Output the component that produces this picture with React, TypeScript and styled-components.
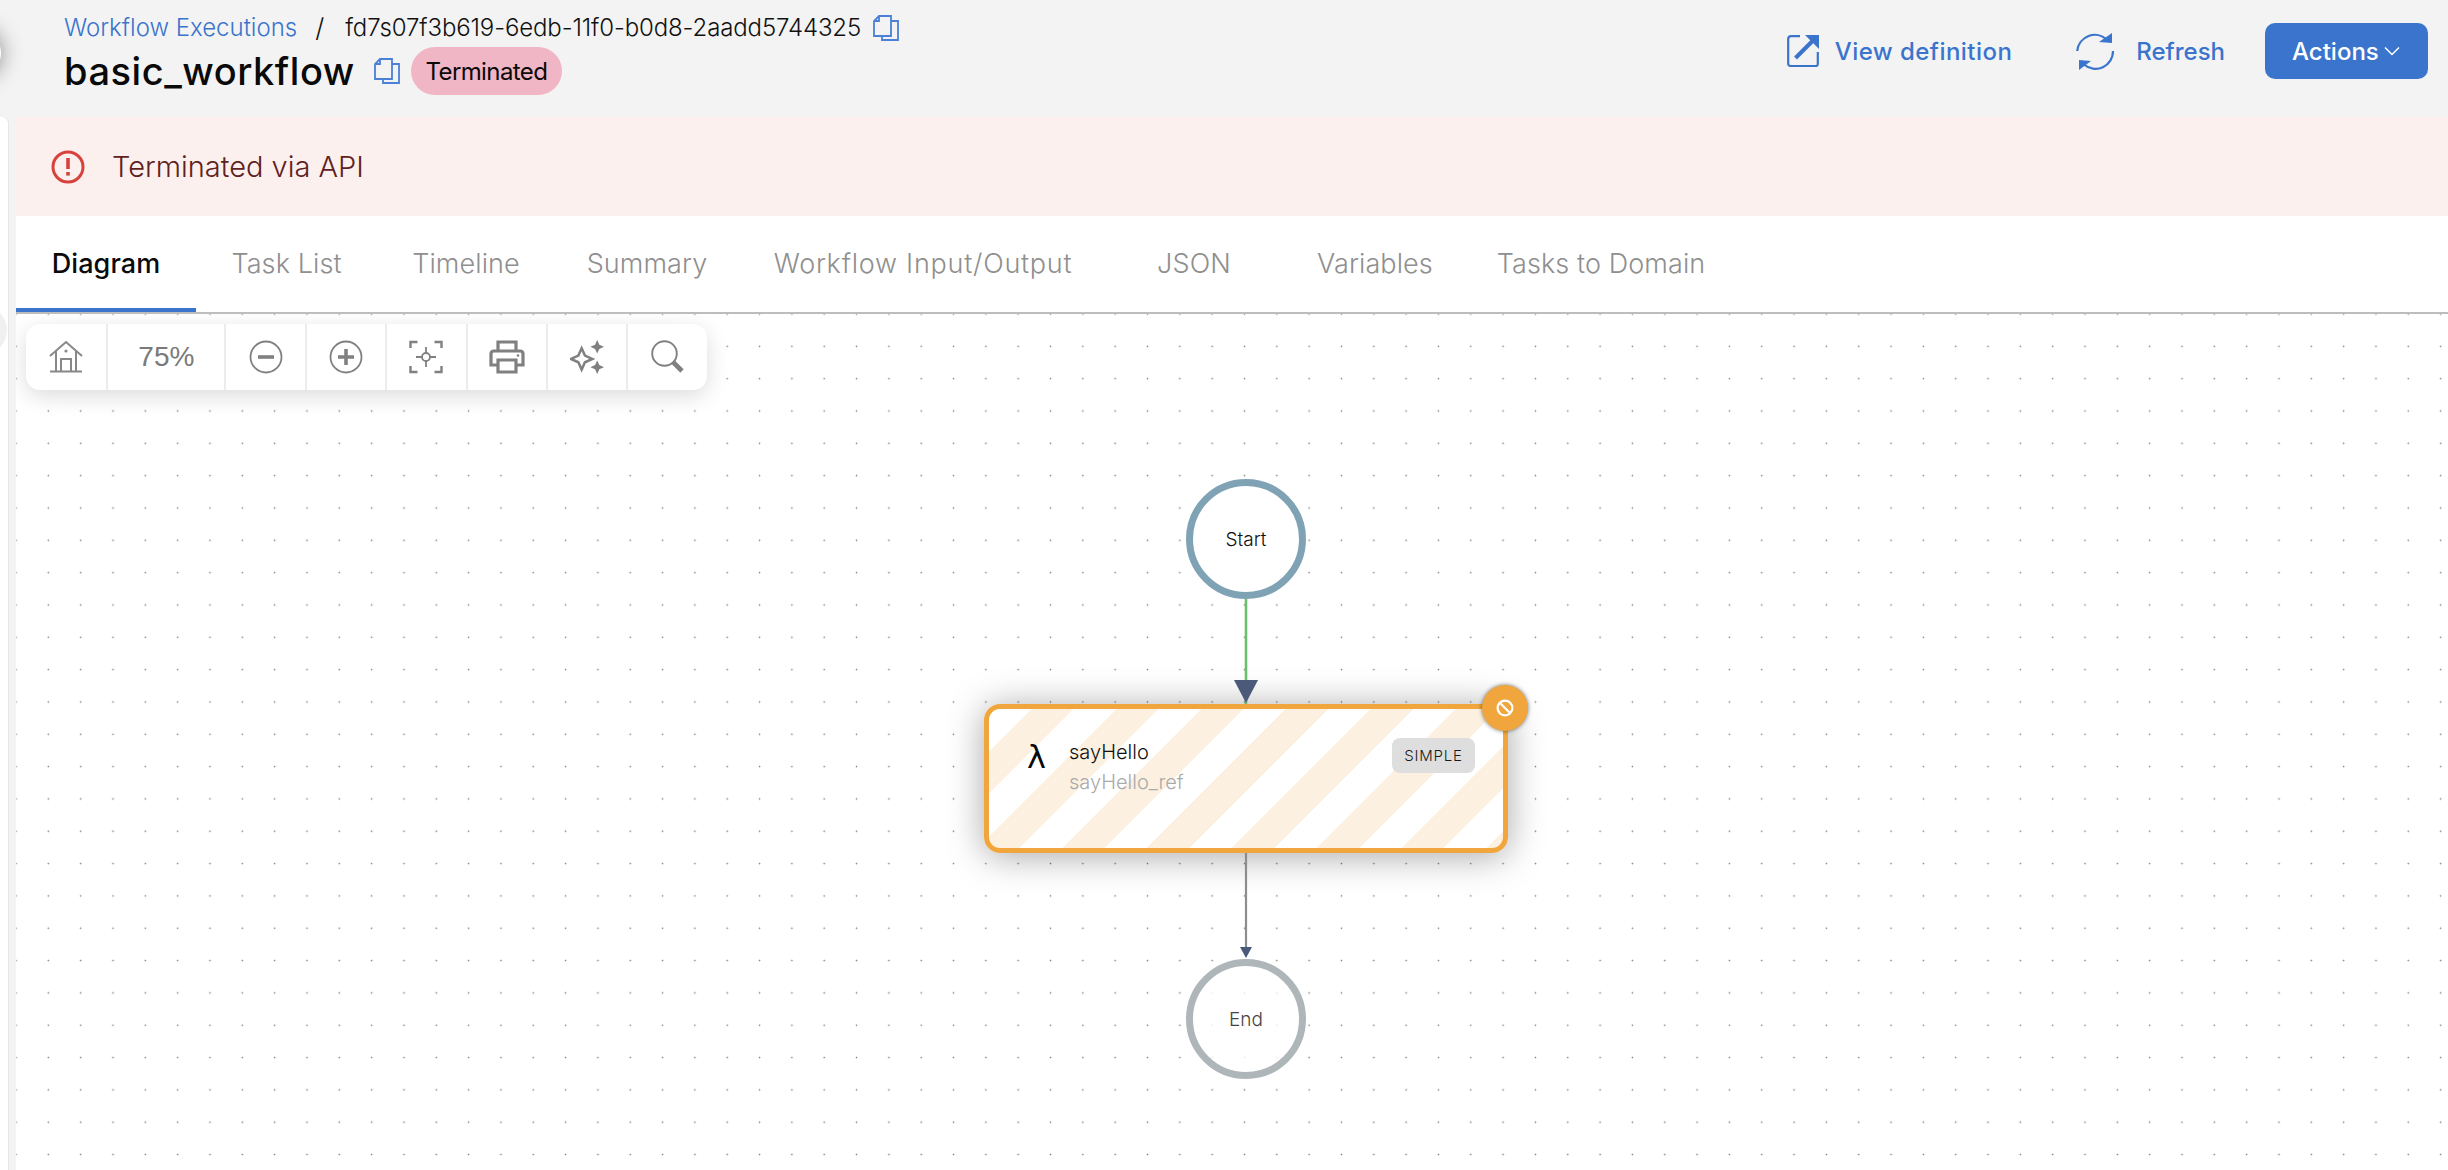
import * as React from 'react'
import styled, { createGlobalStyle } from 'styled-components'

const BLUE = '#3a74cd'
const FONT = `Inter, 'Noto Sans', 'Liberation Sans', sans-serif`

const GlobalStyle = createGlobalStyle`
  html, body {
    margin: 0;
    padding: 0;
    background: #f3f3f3;
    font-family: ${FONT};
  }
`

const CopyIcon = () => (
  <CopySvg viewBox="0 0 26 26" width="26" height="26" fill="none" stroke="#4a80d8" strokeWidth="1.8">
    <path d="M6 1h12v20H1V6z M6 1v5H1" />
    <path d="M18 6h7v19H9v-4" />
  </CopySvg>
)

const ExternalIcon = () => (
  <svg viewBox="0 0 32 32" width="32" height="32" fill="none" stroke={BLUE}>
    <path d="M13 1.2H4Q1.2 1.2 1.2 4v25Q1.2 31 4 31h25Q30.8 31 30.8 29V17" strokeWidth="2.2" />
    <path d="M8.5 23L26 5.5" strokeWidth="4" />
    <polygon points="18,0 32,0 32,14" fill={BLUE} stroke="none" />
  </svg>
)

const RefreshIcon = () => (
  <svg viewBox="0 0 38 38" width="38" height="38" fill="none" stroke={BLUE} strokeWidth="2.2">
    <path d="M1.2 19A17.5 17.5 0 0 1 31 8" />
    <path d="M37 19A17.5 17.5 0 0 1 8 32.5" />
    <polygon points="23,10 36,11 36,1" fill={BLUE} stroke="none" />
    <polygon points="3,28 15,29 3,38" fill={BLUE} stroke="none" />
  </svg>
)

const AlertIcon = () => (
  <svg viewBox="0 0 34 34" width="34" height="34" fill="none">
    <circle cx="17" cy="17" r="15" stroke="#d8423c" strokeWidth="3" />
    <rect x="15.2" y="8" width="3.6" height="11" fill="#d8423c" />
    <rect x="15.2" y="22" width="3.6" height="3.6" fill="#d8423c" />
  </svg>
)

const HomeIcon = () => (
  <svg viewBox="0 0 34 34" width="34" height="34" fill="none" stroke="#888" strokeWidth="2">
    <path d="M1 16L17 2l16 14" />
    <path d="M7 11v20M27 11v20M1 31.5h32" />
    <path d="M12 31V19h10v12" />
    <circle cx="17" cy="11" r="1.6" fill="#888" stroke="none" />
  </svg>
)

const MinusIcon = () => (
  <svg viewBox="0 0 34 34" width="34" height="34" fill="none" stroke="#808080">
    <circle cx="17" cy="17" r="15.5" strokeWidth="1.8" />
    <path d="M9 17h16" strokeWidth="3.6" />
  </svg>
)

const PlusIcon = () => (
  <svg viewBox="0 0 34 34" width="34" height="34" fill="none" stroke="#808080">
    <circle cx="17" cy="17" r="15.5" strokeWidth="1.8" />
    <path d="M9 17h16M17 9v16" strokeWidth="3.6" />
  </svg>
)

const FocusIcon = () => (
  <svg viewBox="0 0 34 34" width="34" height="34" fill="none" stroke="#808080" strokeWidth="2.4">
    <path d="M1.5 8V2h7M25.5 2h7v6M1.5 26v6h7M25.5 32h7v-6" />
    <circle cx="17" cy="17" r="4" strokeWidth="1.8" />
    <path d="M17 7v6M17 21v6M7 17h6M21 17h6" strokeWidth="1.8" />
  </svg>
)

const PrintIcon = () => (
  <svg viewBox="0 0 36 34" width="36" height="34" fill="none" stroke="#808080" strokeWidth="3.2">
    <path d="M9 10V2h18v8" />
    <path d="M8 25H2V14q0-3 3-3h26q3 0 3 3v11h-6" />
    <path d="M9 20h18v12H9z" />
    <circle cx="29" cy="15.5" r="1.3" fill="#808080" stroke="none" />
  </svg>
)

const SparkleIcon = () => (
  <svg viewBox="0 0 35 35" width="34" height="34" fill="#808080">
    <path
      d="M12 8.5l3.4 7.6L23 19.5l-7.6 3.4L12 30.5l-3.4-7.6L1 19.5l7.6-3.4z"
      fill="none"
      stroke="#808080"
      strokeWidth="2.6"
    />
    <path d="M28 0l2.2 4.8L35 7l-4.8 2.2L28 14l-2.2-4.8L21 7l4.8-2.2z" />
    <path d="M28 21l2.2 4.8L35 28l-4.8 2.2L28 35l-2.2-4.8L21 28l4.8-2.2z" />
  </svg>
)

const SearchIcon = () => (
  <svg viewBox="0 0 34 34" width="34" height="34" fill="none" stroke="#808080">
    <circle cx="13.5" cy="13.5" r="12.3" strokeWidth="1.9" />
    <path d="M22 22l9 9" strokeWidth="4.6" />
  </svg>
)

const BanIcon = () => (
  <svg viewBox="0 0 18 18" width="18" height="18" fill="none" stroke="#fff" strokeWidth="2.2">
    <circle cx="9" cy="9" r="7.4" />
    <path d="M4 4l10 10" />
  </svg>
)

const tabs = [
  { label: 'Diagram', width: 180, active: true },
  { label: 'Task List', width: 181 },
  { label: 'Timeline', width: 178 },
  { label: 'Summary', width: 184 },
  { label: 'Workflow Input/Output', width: 368, spacing: 0.75 },
  { label: 'JSON', width: 174 },
  { label: 'Variables', width: 188 },
  { label: 'Tasks to Domain', width: 264 }
]

const tools = [
  { icon: <HomeIcon /> },
  { text: '75%' },
  { icon: <MinusIcon /> },
  { icon: <PlusIcon /> },
  { icon: <FocusIcon /> },
  { icon: <PrintIcon /> },
  { icon: <SparkleIcon /> },
  { icon: <SearchIcon /> }
]

export default function App() {
  return (
    <Page>
      <GlobalStyle />
      <CollapseHandle />
      <Header>
        <TitleBlock>
          <Crumbs>
            <CrumbLink>Workflow Executions</CrumbLink>
            <CrumbSlash>/</CrumbSlash>
            <CrumbId>fd7s07f3b619-6edb-11f0-b0d8-2aadd5744325</CrumbId>
            <CopyIcon />
          </Crumbs>
          <TitleRow>
            <Title>basic_workflow</Title>
            <CopyIcon />
            <StatusBadge>Terminated</StatusBadge>
          </TitleRow>
        </TitleBlock>
        <HeaderActions>
          <LinkButton $gap={16} $after={64} $spacing={0.45}>
            <ExternalIcon />
            View definition
          </LinkButton>
          <LinkButton $gap={22} $after={40}>
            <RefreshIcon />
            Refresh
          </LinkButton>
          <ActionsButton>
            Actions
            <svg viewBox="0 0 16 10" width="16" height="10" fill="none" stroke="#fff" strokeWidth="1.5">
              <path d="M1 1.5l7 7 7-7" />
            </svg>
          </ActionsButton>
        </HeaderActions>
      </Header>
      <Body>
        <SideEdge>
          <SideHandle />
        </SideEdge>
        <Main>
          <Banner>
            <AlertIcon />
            <BannerText>Terminated via API</BannerText>
          </Banner>
          <TabBar>
            {tabs.map(tab => (
              <Tab key={tab.label} $width={tab.width} $active={tab.active} $spacing={tab.spacing}>
                {tab.label}
              </Tab>
            ))}
          </TabBar>
          <Canvas>
            <Toolbar>
              {tools.map((tool, i) => (
                <ToolCell key={i} $wide={!!tool.text}>
                  {tool.icon || tool.text}
                </ToolCell>
              ))}
            </Toolbar>
            <Edges viewBox="0 0 2432 856" width="2432" height="856">
              <line x1="1230" y1="285" x2="1230" y2="390" stroke="#6cbf6c" strokeWidth="2.6" />
              <polygon points="1218,366 1242,366 1230,389" fill="#4a5a78" />
              <line x1="1230" y1="539" x2="1230" y2="636" stroke="#8b8e91" strokeWidth="2.2" />
              <polygon points="1224,633 1236,633 1230,644" fill="#4a5a78" />
            </Edges>
            <Terminal $left={1170} $top={165} $ring="#7fa3b5" $opaque>
              Start
            </Terminal>
            <TaskNode>
              <Lambda>λ</Lambda>
              <TaskNames>
                <TaskName>sayHello</TaskName>
                <TaskRef>sayHello_ref</TaskRef>
              </TaskNames>
              <TaskChip>SIMPLE</TaskChip>
              <StatusDot>
                <BanIcon />
              </StatusDot>
            </TaskNode>
            <Terminal $left={1170} $top={645} $ring="#aeb6b9" $muted>
              End
            </Terminal>
          </Canvas>
        </Main>
      </Body>
    </Page>
  )
}

const Page = styled.div`
  position: relative;
  width: 2448px;
  height: 1170px;
  overflow: hidden;
  display: flex;
  flex-direction: column;
  background: #f3f3f3;
`

const CollapseHandle = styled.div`
  position: absolute;
  left: -49px;
  top: 28px;
  width: 50px;
  height: 50px;
  border-radius: 50%;
  background: #fff;
  box-shadow: 0 0 22px rgba(0, 0, 0, 0.45);
`

const Header = styled.header`
  height: 117px;
  flex: none;
  display: flex;
  justify-content: space-between;
  padding: 0 20px 0 64px;
  box-sizing: border-box;
`

const TitleBlock = styled.div`
  display: flex;
  flex-direction: column;
`

const Crumbs = styled.div`
  height: 47px;
  padding-top: 8px;
  box-sizing: border-box;
  display: flex;
  align-items: center;
  white-space: nowrap;
`

const CrumbLink = styled.span`
  color: ${BLUE};
  font-weight: 300;
  font-size: 24px;
`

const CrumbSlash = styled.span`
  margin: 0 21px 0 18px;
  font-size: 26px;
  font-weight: 300;
  color: #111;
`

const CrumbId = styled.span`
  color: #111;
  font-weight: 300;
  font-size: 24px;
  margin-right: 12px;
  letter-spacing: -0.12px;
`

const CopySvg = styled.svg`
  flex: none;
`

const TitleRow = styled.div`
  height: 48px;
  display: flex;
  align-items: center;
`

const Title = styled.h1`
  margin: 0 19px 0 0;
  font-size: 38px;
  font-weight: 500;
  color: #0a0a0a;
  letter-spacing: 0.55px;
`

const StatusBadge = styled.span`
  margin-left: 11px;
  height: 48px;
  width: 151px;
  border-radius: 24px;
  background: #f0b6c5;
  display: flex;
  align-items: center;
  justify-content: center;
  font-size: 24px;
  letter-spacing: -0.6px;
  color: #0a0a0a;
`

const HeaderActions = styled.div`
  height: 56px;
  margin-top: 23px;
  display: flex;
  align-items: center;
`

const LinkButton = styled.div<{ $gap: number; $after: number; $spacing?: number }>`
  display: flex;
  align-items: center;
  gap: ${p => p.$gap}px;
  margin-right: ${p => p.$after}px;
  color: ${BLUE};
  font-size: 24px;
  font-weight: 500;
  letter-spacing: ${p => p.$spacing || 0}px;
  white-space: nowrap;
`

const ActionsButton = styled.div`
  width: 163px;
  height: 56px;
  box-sizing: border-box;
  padding-left: 27px;
  border-radius: 10px;
  background: ${BLUE};
  color: #fff;
  font-size: 24px;
  font-weight: 500;
  display: flex;
  align-items: center;
  gap: 5px;
`

const Body = styled.div`
  flex: 1;
  display: flex;
  min-height: 0;
`

const SideEdge = styled.div`
  position: relative;
  flex: none;
  width: 8px;
  margin-right: 8px;
  background: #fff;
  border-top-right-radius: 6px;
  box-shadow: 1px 0 0 #e6e6e6;
  overflow: hidden;
`

const SideHandle = styled.div`
  position: absolute;
  left: -43px;
  top: 188px;
  width: 50px;
  height: 50px;
  border-radius: 50%;
  background: #f0f0f0;
`

const Main = styled.main`
  flex: 1;
  min-width: 0;
  display: flex;
  flex-direction: column;
  background: #fff;
`

const Banner = styled.div`
  height: 99px;
  flex: none;
  box-sizing: border-box;
  padding-left: 35px;
  display: flex;
  align-items: center;
  gap: 27px;
  background: #fbf0ee;
`

const BannerText = styled.span`
  font-size: 29px;
  font-weight: 300;
  color: #5f2120;
`

const TabBar = styled.nav`
  height: 98px;
  flex: none;
  box-sizing: border-box;
  display: flex;
  border-bottom: 2px solid #bdbdbd;
  background: #fff;
`

const Tab = styled.div<{ $width: number; $active?: boolean; $spacing?: number }>`
  width: ${p => p.$width}px;
  height: 100%;
  box-sizing: border-box;
  padding-top: 2px;
  display: flex;
  align-items: center;
  justify-content: center;
  font-size: 27px;
  font-weight: ${p => (p.$active ? 500 : 300)};
  color: ${p => (p.$active ? '#0a0a0a' : '#8f8f8f')};
  letter-spacing: ${p => p.$spacing || 0.1}px;
  border-bottom: 4px solid ${p => (p.$active ? BLUE : 'transparent')};
  white-space: nowrap;
`

const Canvas = styled.section`
  position: relative;
  flex: 1;
  overflow: hidden;
  background-color: #fff;
  background-image: radial-gradient(circle, #808080 0.8px, transparent 1.05px);
  background-size: 32.33px 32.33px;
  background-position: -16.17px -16.17px;
`

const Toolbar = styled.div`
  position: absolute;
  left: 10px;
  top: 10px;
  height: 66px;
  display: flex;
  background: #fff;
  border-radius: 14px;
  box-shadow: 0 6px 22px rgba(0, 0, 0, 0.14);
  z-index: 2;
`

const ToolCell = styled.div<{ $wide: boolean }>`
  width: ${p => (p.$wide ? 118 : 80.4)}px;
  height: 100%;
  box-sizing: border-box;
  display: flex;
  align-items: center;
  justify-content: center;
  color: #7a7a7a;
  font-family: 'Liberation Sans', Arial, sans-serif;
  font-size: 28px;
  & + & {
    border-left: 2px solid #ececec;
  }
`

const Edges = styled.svg`
  position: absolute;
  left: 0;
  top: 0;
  z-index: 1;
`

const Terminal = styled.div<{ $left: number; $top: number; $ring: string; $opaque?: boolean; $muted?: boolean }>`
  position: absolute;
  left: ${p => p.$left}px;
  top: ${p => p.$top}px;
  width: 120px;
  height: 120px;
  box-sizing: border-box;
  border: 7.5px solid ${p => p.$ring};
  border-radius: 50%;
  background: ${p => (p.$opaque ? '#fff' : 'rgba(255, 255, 255, 0.8)')};
  display: flex;
  align-items: center;
  justify-content: center;
  font-size: 19px;
  font-weight: 300;
  color: ${p => (p.$muted ? '#444' : '#111')};
`

const TaskNode = styled.div`
  position: absolute;
  left: 968px;
  top: 390px;
  width: 524px;
  height: 149px;
  box-sizing: border-box;
  display: flex;
  align-items: flex-start;
  padding: 31px 28px 0 38px;
  border: 5px solid #f0a63c;
  border-radius: 16px;
  background: repeating-linear-gradient(135deg, #fff 0 30px, #fcf0e0 30px 60px);
  box-shadow: 0 3px 36px rgba(0, 0, 0, 0.35);
`

const Lambda = styled.span`
  width: 42px;
  margin-top: 1px;
  font-size: 32px;
  line-height: 32px;
  color: #0a0a0a;
  font-family: 'DejaVu Sans', sans-serif;
`

const TaskNames = styled.div`
  flex: 1;
  display: flex;
  flex-direction: column;
  gap: 5px;
`

const TaskName = styled.span`
  font-size: 20px;
  line-height: 25px;
  font-weight: 300;
  color: #111;
`

const TaskRef = styled.span`
  font-size: 20px;
  line-height: 25px;
  font-weight: 300;
  color: #aaa;
`

const TaskChip = styled.span`
  width: 83px;
  height: 35px;
  margin-top: -2px;
  border-radius: 8px;
  background: #dedede;
  display: flex;
  align-items: center;
  justify-content: center;
  font-size: 15px;
  font-weight: 300;
  letter-spacing: 0.8px;
  color: #1a1a1a;
`

const StatusDot = styled.div`
  position: absolute;
  right: -25px;
  top: -24px;
  width: 46px;
  height: 46px;
  border-radius: 50%;
  background: #f0a63c;
  box-shadow: 0 0 4px rgba(0, 0, 0, 0.55);
  display: flex;
  align-items: center;
  justify-content: center;
`
